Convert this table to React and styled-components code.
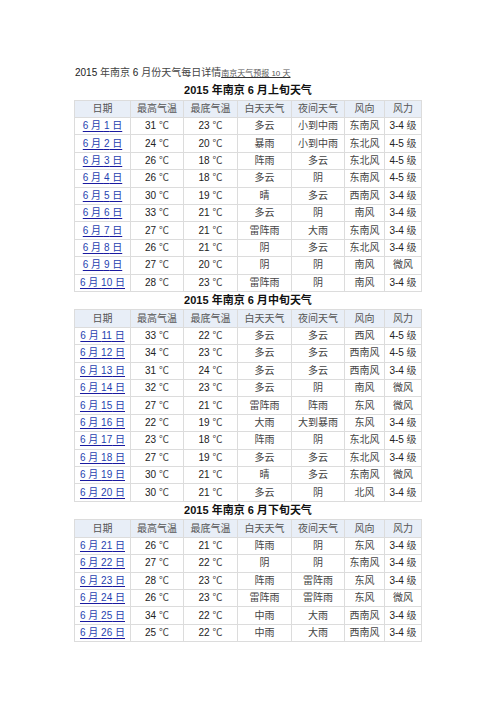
import React from "react";
import styled, { createGlobalStyle } from "styled-components";

const Global = createGlobalStyle`
  html, body { margin: 0; padding: 0; background: #fff; }
  body { width: 496px; font-family: "Liberation Sans", "Noto Sans CJK SC", sans-serif; }
`;

const Page = styled.div`
  width: 496px;
  padding-top: 66px;
  display: flex;
  flex-direction: column;
  align-items: center;
`;

const Intro = styled.div`
  width: 346px;
  font-size: 10px;
  line-height: 14px;
  color: #444;
  white-space: nowrap;
`;

const Num = styled.span`
  color: #222;
`;

const SmallLink = styled.span`
  font-size: 8px;
  color: #555;
  text-decoration: underline;
  text-decoration-color: #333;
`;

const Title = styled.div`
  width: 346px;
  height: 17.6px;
  line-height: 17.6px;
  margin-top: ${(p) => p.$top || 0}px;
  text-align: center;
  font-weight: bold;
  font-size: 11px;
  color: #111;
  white-space: nowrap;
`;

const Table = styled.table`
  width: 347px;
  border-collapse: collapse;
  table-layout: fixed;
`;

const Cell = styled.td`
  height: 16.4px;
  padding: 0;
  border: 1px solid #dcdcdc;
  text-align: center;
  font-size: 10px;
  line-height: 16px;
  font-weight: normal;
  color: ${(p) => (p.$head ? "#555" : "#444")};
  background: ${(p) => (p.$head ? "#e8eef7" : "#fff")};
  white-space: nowrap;
  overflow: hidden;
`;

const DateLink = styled.a`
  color: #1f3fb0;
  text-decoration: underline;
  text-decoration-color: #1a1aa0;
  text-underline-offset: 2px;
`;

const widths = [56, 53, 54, 54, 53, 40, 37];
const heads = ["日期", "最高气温", "最底气温", "白天天气", "夜间天气", "风向", "风力"];

const sections = [
  {
    title: "上旬",
    rows: [
      [1, 31, 23, "多云", "小到中雨", "东南风", "3-4"],
      [2, 24, 20, "暴雨", "小到中雨", "东北风", "4-5"],
      [3, 26, 18, "阵雨", "多云", "东北风", "4-5"],
      [4, 26, 18, "多云", "阴", "东南风", "4-5"],
      [5, 30, 19, "晴", "多云", "西南风", "3-4"],
      [6, 33, 21, "多云", "阴", "南风", "3-4"],
      [7, 27, 21, "雷阵雨", "大雨", "东南风", "3-4"],
      [8, 26, 21, "阴", "多云", "东北风", "3-4"],
      [9, 27, 20, "阴", "阴", "南风", "微风"],
      [10, 28, 23, "雷阵雨", "阴", "南风", "3-4"],
    ],
  },
  {
    title: "中旬",
    rows: [
      [11, 33, 22, "多云", "多云", "西风", "4-5"],
      [12, 34, 23, "多云", "多云", "西南风", "4-5"],
      [13, 31, 24, "多云", "多云", "西南风", "3-4"],
      [14, 32, 23, "多云", "阴", "南风", "微风"],
      [15, 27, 21, "雷阵雨", "阵雨", "东风", "微风"],
      [16, 22, 19, "大雨", "大到暴雨", "东风", "3-4"],
      [17, 23, 18, "阵雨", "阴", "东北风", "4-5"],
      [18, 27, 19, "多云", "多云", "东北风", "3-4"],
      [19, 30, 21, "晴", "多云", "东南风", "微风"],
      [20, 30, 21, "多云", "阴", "北风", "3-4"],
    ],
  },
  {
    title: "下旬",
    rows: [
      [21, 26, 21, "阵雨", "阴", "东风", "3-4"],
      [22, 27, 22, "阴", "阴", "东南风", "3-4"],
      [23, 28, 23, "阵雨", "雷阵雨", "东风", "3-4"],
      [24, 26, 23, "雷阵雨", "雷阵雨", "东风", "微风"],
      [25, 34, 22, "中雨", "大雨", "西南风", "3-4"],
      [26, 25, 22, "中雨", "大雨", "西南风", "3-4"],
    ],
  },
];

function Force({ v }) {
  if (v === "微风") return <>微风</>;
  return (
    <>
      <Num>{v}</Num> 级
    </>
  );
}

function Section({ s, first }) {
  return (
    <>
      <Title $top={first ? 1 : 0}>
        2015 年南京 6 月{s.title}天气
      </Title>
      <Table>
        <colgroup>
          {widths.map((w, i) => (
            <col key={i} style={{ width: w }} />
          ))}
        </colgroup>
        <tbody>
          <tr>
            {heads.map((h) => (
              <Cell as="th" key={h} $head>
                {h}
              </Cell>
            ))}
          </tr>
          {s.rows.map((r) => (
            <tr key={r[0]}>
              <Cell>
                <DateLink href="#">
                  6 月 {r[0]} 日
                </DateLink>
              </Cell>
              <Cell>
                <Num>{r[1]}</Num> ℃
              </Cell>
              <Cell>
                <Num>{r[2]}</Num> ℃
              </Cell>
              <Cell>{r[3]}</Cell>
              <Cell>{r[4]}</Cell>
              <Cell>{r[5]}</Cell>
              <Cell>
                <Force v={r[6]} />
              </Cell>
            </tr>
          ))}
        </tbody>
      </Table>
    </>
  );
}

export default function App() {
  return (
    <>
      <Global />
      <Page>
        <Intro>
          <Num>2015</Num> 年南京 <Num>6</Num> 月份天气每日详情
          <SmallLink>南京天气预报 10 天</SmallLink>
        </Intro>
        {sections.map((s, i) => (
          <Section key={s.title} s={s} first={i === 0} />
        ))}
      </Page>
    </>
  );
}
